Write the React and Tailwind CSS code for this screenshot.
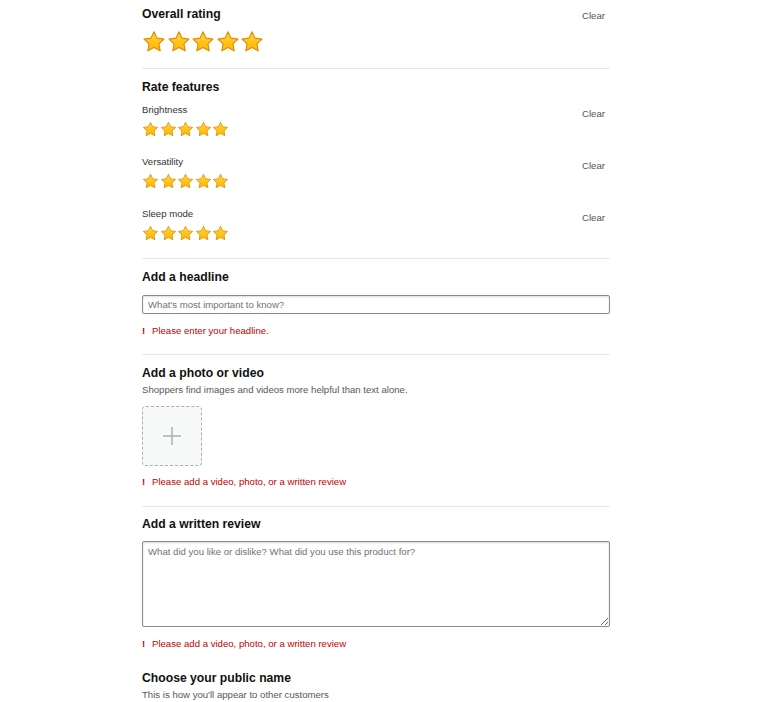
import { useState } from 'react';

// Star rating row
function Star({ size }) {
    return (
        <svg width={size} height={size} viewBox="0 0 24 24" className="shrink-0 block">
            <defs>
                <linearGradient id="starFill" x1="0" y1="0" x2="0" y2="1">
                    <stop offset="0%" stopColor="#ffd83d" />
                    <stop offset="100%" stopColor="#ffb400" />
                </linearGradient>
            </defs>
            <path
                d="M12 1.8l3.05 6.35 6.95.95-5.05 4.85 1.25 6.9L12 17.55l-6.2 3.3 1.25-6.9L2 9.1l6.95-.95z"
                fill="url(#starFill)"
                stroke="#e08a00"
                strokeWidth="1.1"
                strokeLinejoin="round"
            />
        </svg>
    );
}

function Stars({ size, gap }) {
    return (
        <div className={`flex ${gap}`}>
            {[0, 1, 2, 3, 4].map((i) => (
                <Star key={i} size={size} />
            ))}
        </div>
    );
}

function ClearLink({ className = '' }) {
    return <button className={`relative text-[9.6px] leading-[13px] text-[#555] pr-[5px] ${className}`}>Clear</button>;
}

function ErrorLine({ text, className = '' }) {
    return (
        <div className={`flex items-center text-[9.6px] leading-[13px] text-[#c40000] ${className}`}>
            <span className="w-[10px] font-bold">!</span>
            <span>{text}</span>
        </div>
    );
}

function Heading({ children, className = '' }) {
    return <h3 className={`text-[12.2px] leading-[17px] font-bold text-[#0f1111] ${className}`}>{children}</h3>;
}

const features = ['Brightness', 'Versatility', 'Sleep mode'];

export default function App() {
    const [headline, setHeadline] = useState('');
    const [review, setReview] = useState('');

    return (
        <div className="min-h-[702px] bg-white font-['Liberation_Sans',Arial,sans-serif]">
            <div className="ml-[142px] w-[468px]">
                {/* Overall rating */}
                <div className="pt-[6px] pb-[14px] border-b border-[#e7e7e7]">
                    <div className="flex items-start justify-between h-[17px]">
                        <Heading>Overall rating</Heading>
                        <ClearLink className="top-[3px]" />
                    </div>
                    <div className="mt-[7px]">
                        <Stars size={24} gap="gap-[0.5px]" />
                    </div>
                </div>

                {/* Rate features */}
                <div className="pt-[10px] pb-[16px] border-b border-[#e7e7e7]">
                    <Heading>Rate features</Heading>
                    <div className="mt-[7px] flex flex-col gap-[17px]">
                        {features.map((f) => (
                            <div key={f}>
                                <div className="flex items-start justify-between h-[13px]">
                                    <span className="text-[9.6px] leading-[13px] text-[#333]">{f}</span>
                                    <ClearLink className="top-[4px]" />
                                </div>
                                <div className="mt-[5px]">
                                    <Stars size={17} gap="gap-[0.6px]" />
                                </div>
                            </div>
                        ))}
                    </div>
                </div>

                {/* Headline */}
                <div className="pt-[10px] pb-[17px] border-b border-[#e7e7e7]">
                    <Heading>Add a headline</Heading>
                    <input
                        value={headline}
                        onChange={(e) => setHeadline(e.target.value)}
                        placeholder="What's most important to know?"
                        className="mt-[9px] block w-full h-[19px] px-[5px] border border-[#888c8c] rounded-[2px] shadow-[inset_0_1px_2px_rgba(15,17,17,0.15)] text-[9.6px] text-[#0f1111] placeholder:text-[#6f7373] outline-none"
                    />
                    <ErrorLine text="Please enter your headline." className="mt-[10px]" />
                </div>

                {/* Photo or video */}
                <div className="pt-[10px] pb-[18px] border-b border-[#e7e7e7]">
                    <Heading>Add a photo or video</Heading>
                    <p className="mt-[1px] text-[9.6px] leading-[13px] text-[#565959]">
                        Shoppers find images and videos more helpful than text alone.
                    </p>
                    <div className="mt-[10px] w-[60px] h-[60px] rounded-[4px] border border-dashed border-[#aab0b0] bg-[#f7f8f8] flex items-center justify-center">
                        <svg width="20" height="20" viewBox="0 0 20 20">
                            <path d="M10 1v18M1 10h18" stroke="#aab0b0" strokeWidth="1.5" />
                        </svg>
                    </div>
                    <ErrorLine text="Please add a video, photo, or a written review" className="mt-[9px]" />
                </div>

                {/* Written review */}
                <div className="pt-[9px]">
                    <Heading>Add a written review</Heading>
                    <textarea
                        value={review}
                        onChange={(e) => setReview(e.target.value)}
                        placeholder="What did you like or dislike? What did you use this product for?"
                        className="mt-[8px] block w-full h-[86px] px-[5px] py-[3px] border border-[#888c8c] rounded-[2px] shadow-[inset_0_1px_2px_rgba(15,17,17,0.15)] text-[9.6px] leading-[13px] text-[#0f1111] placeholder:text-[#6f7373] outline-none"
                    />
                    <ErrorLine text="Please add a video, photo, or a written review" className="mt-[10px]" />
                </div>

                {/* Public name */}
                <div className="mt-[20px]">
                    <Heading>Choose your public name</Heading>
                    <p className="mt-[1px] text-[9.6px] leading-[13px] text-[#565959]">
                        This is how you'll appear to other customers
                    </p>
                </div>
            </div>
        </div>
    );
}
